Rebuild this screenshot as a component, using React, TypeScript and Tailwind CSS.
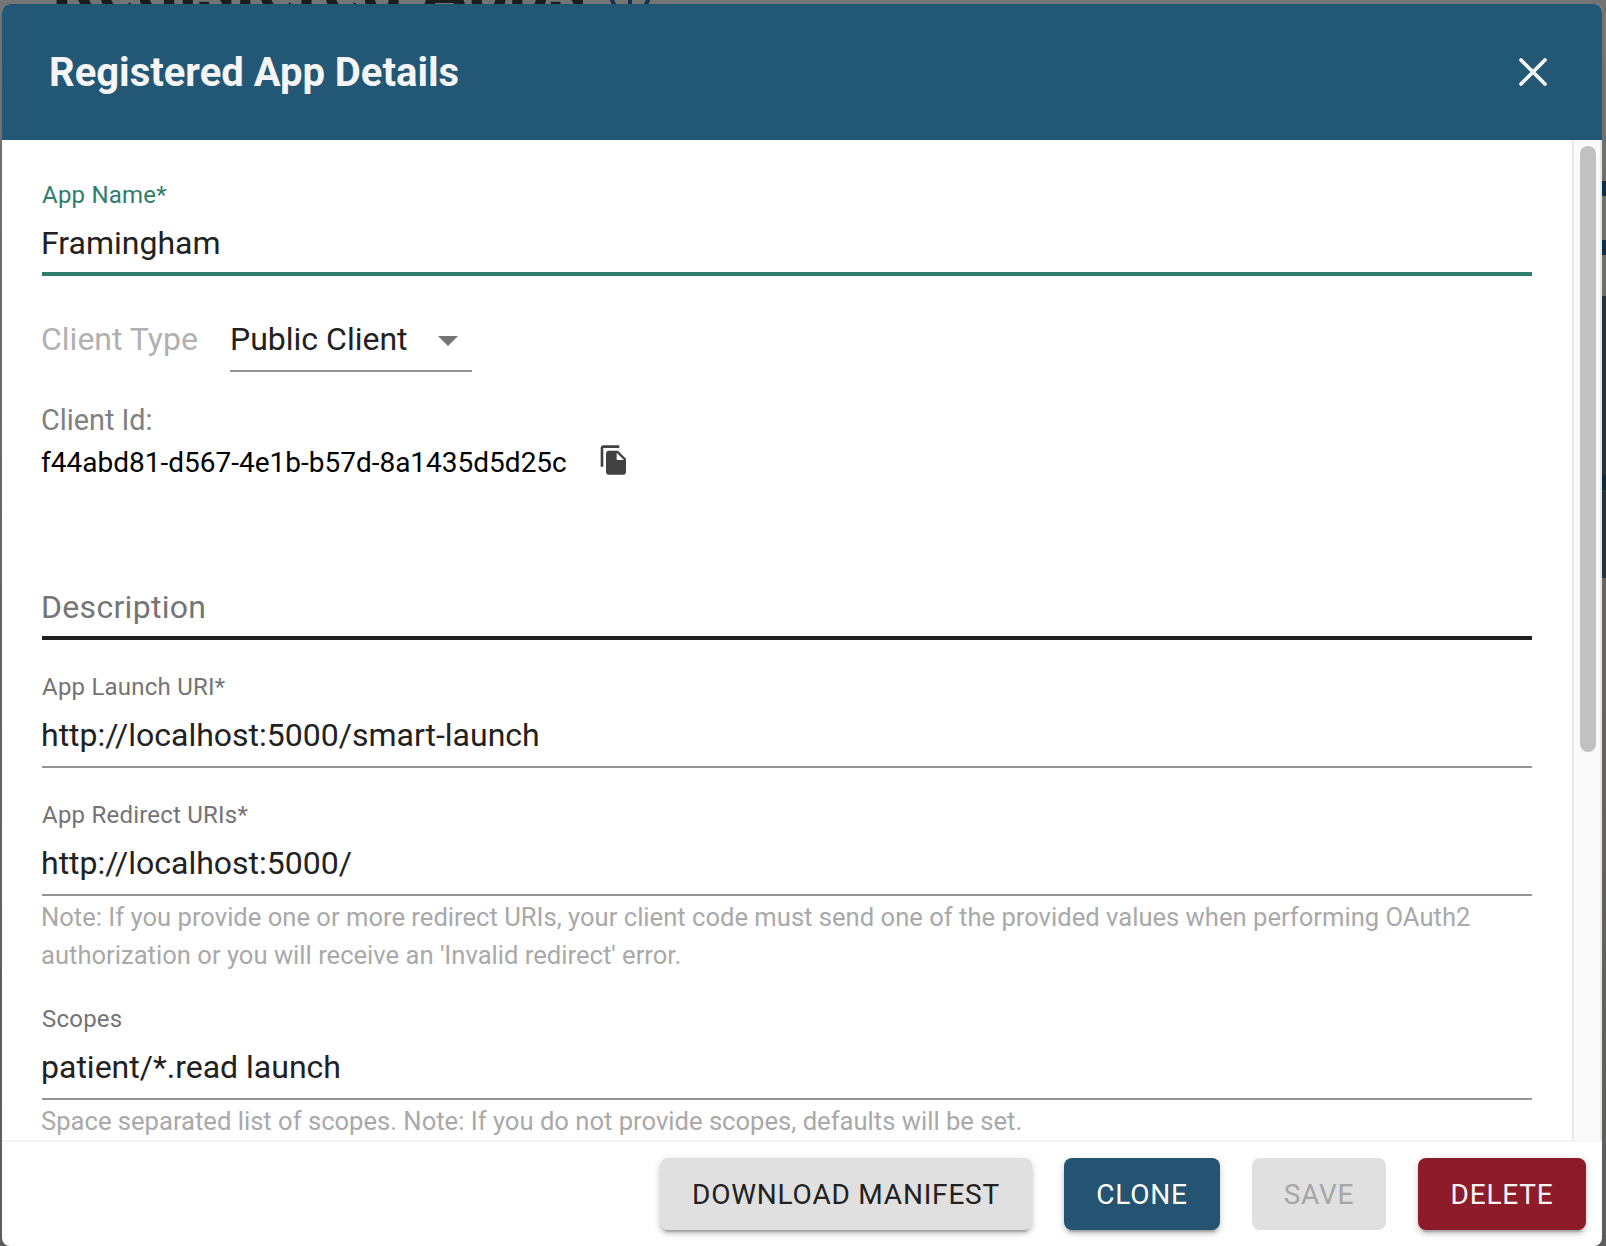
import type { ReactNode } from "react";

function Field({ label, value, focused = false }: { label: string; value: string; focused?: boolean }) {
  return (
    <div
      className={
        focused
          ? "flex h-[136px] shrink-0 flex-col border-b-[4px] border-[#2f7d6b] pt-[41px]"
          : "flex h-[128px] shrink-0 flex-col border-b-2 border-[#949494] pt-[33px]"
      }
    >
      <div className={`text-[24px] leading-[28px] tracking-[0.22px] ${focused ? "text-[#2f7d6b]" : "text-[#747474]"}`}>
        {label}
      </div>
      <div className="-ml-px pt-[15px] text-[32px] leading-[38px] text-[#212121]">{value}</div>
    </div>
  );
}

function Hint({ children, className }: { children: ReactNode; className: string }) {
  return (
    <p className={`-ml-px shrink-0 pt-[2px] text-[25.6px] leading-[38px] whitespace-nowrap text-[#a9a9a9] ${className}`}>
      {children}
    </p>
  );
}

function Backdrop() {
  return (
    <div className="absolute inset-0 bg-linear-to-b from-[#747474] via-[#666562] to-[#5c5c5c]">
      <div className="absolute -top-[46px] left-[52px] text-[72px] leading-[72px] font-bold whitespace-nowrap text-[#1c1c1c]">
        Registered Apps
      </div>
      <svg className="absolute -top-[27px] left-[609px] h-[42px] w-[42px]" viewBox="0 0 42 42" fill="none" stroke="#16304a" strokeWidth="4">
        <circle cx="21" cy="21" r="19" />
        <path d="M21 19V33" />
      </svg>
      <div className="absolute top-[181px] right-0 h-[15px] w-[4px] bg-[#0c2f49]" />
      <div className="absolute top-[240px] right-0 h-[15px] w-[4px] bg-[#0c2f49]" />
      <div className="absolute top-[296px] right-0 h-[282px] w-[4px] bg-[#25343e]" />
      <div className="absolute top-[475px] right-0 h-[15px] w-[4px] bg-[#0b2a3a]" />
    </div>
  );
}

const raised = "shadow-[0_6px_2px_-4px_rgba(0,0,0,0.2),0_4px_4px_0_rgba(0,0,0,0.14),0_2px_10px_0_rgba(0,0,0,0.12)]";

function Button({ children, className }: { children: ReactNode; className: string }) {
  return (
    <button
      type="button"
      className={`flex h-[72px] items-center justify-center rounded-[8px] pt-px text-[28px] leading-[36px] tracking-[0.8px] whitespace-nowrap ${className}`}
    >
      {children}
    </button>
  );
}

export default function App() {
  return (
    <div className="relative h-[1246px] w-[1606px] overflow-hidden font-['Roboto',sans-serif]">
      <Backdrop />
      <div className="relative mt-[4px] ml-[2px] flex h-[1242px] w-[1600px] flex-col overflow-hidden rounded-[8px] bg-white">
        <header className="flex h-[136px] shrink-0 items-center justify-between bg-[#225775] pr-[54px] pl-[47px]">
          <h1 className="pt-[2px] text-[40px] leading-[48px] font-bold text-[#f5f5f5]">Registered App Details</h1>
          <svg className="h-[30px] w-[30px]" viewBox="0 0 30 30" fill="none" stroke="#fafafa" strokeWidth="3.7" strokeLinecap="round">
            <path d="M3 3L27 27M27 3L3 27" />
          </svg>
        </header>

        <div className="flex h-[1000px] shrink-0">
          <main className="flex h-[1000px] w-[1570px] shrink-0 flex-col pr-[40px] pl-[40px]">
            <Field label="App Name*" value="Framingham" focused />
            <div className="mt-[36px] -ml-px flex h-[60px] shrink-0 items-start text-[32px] leading-[38px]">
              <span className="w-[189px] pt-[8px] text-[#b1b1b1]">Client Type</span>
              <div className="flex h-[60px] w-[242px] items-start justify-between border-b-2 border-[#949494] pt-[8px] pr-[14px] text-[#212121]">
                Public Client
                <svg className="mt-[16px] h-[10px] w-[20px]" viewBox="0 0 20 10">
                  <path d="M0 0H20L10 10Z" fill="#757575" />
                </svg>
              </div>
            </div>
            <div className="mt-[30px] -ml-px shrink-0 text-[28.8px] leading-[36px] text-[#808080]">Client Id:</div>
            <div className="mt-[6px] -ml-px flex h-[38px] shrink-0 items-start text-[28px] text-black">
              <span className="w-[557px] pt-px leading-[36px]">f44abd81-d567-4e1b-b57d-8a1435d5d25c</span>
              <svg className="h-[32px] w-[32px]" viewBox="0 0 24 24" fill="#424242">
                <path d="M16 1H4c-1.1 0-2 .9-2 2v14h2V3h12V1zm-1 4l6 6v10c0 1.1-.9 2-2 2H7.990C6.890 23 6 22.100 6 21l.010-14c0-1.100.890-2 1.990-2h7zm-1 7h5.500L14 6.500V12z" />
              </svg>
            </div>
            <div className="mt-[106px] h-[52px] shrink-0 border-b-[4px] border-[#212121] text-[32px] leading-[38px] text-[#757575]">
              <span className="-ml-px tracking-[0.3px]">Description</span>
            </div>
            <Field label="App Launch URI*" value="http://localhost:5000/smart-launch" />
            <Field label="App Redirect URIs*" value="http://localhost:5000/" />
            <Hint className="h-[76px]">
              Note: If you provide one or more redirect URIs, your client code must send one of the provided values when performing OAuth2
              <br />
              authorization or you will receive an 'Invalid redirect' error.
            </Hint>
            <Field label="Scopes" value="patient/*.read launch" />
            <Hint className="h-[40px]">
              Space separated list of scopes. Note: If you do not provide scopes, defaults will be set.
            </Hint>
          </main>
          <div className="flex w-[30px] shrink-0 border-x-2 border-[#e8e8e8] bg-[#fafafa] pt-[6px] pl-[6px]">
            <div className="h-[606px] w-[16px] rounded-full bg-[#c1c1c1]" />
          </div>
        </div>

        <footer className="flex h-[102px] shrink-0 items-start justify-end border-t-2 border-[#f4f4f4] pt-[16px] pr-[16px]">
          <Button className={`mr-[32px] w-[372px] bg-[#e0e0e0] text-[#212121] ${raised}`}>DOWNLOAD MANIFEST</Button>
          <Button className={`mr-[32px] w-[156px] bg-[#255472] text-white ${raised}`}>CLONE</Button>
          <Button className="mr-[32px] w-[134px] bg-[#e0e0e0] text-[#a6a6a6]">SAVE</Button>
          <Button className={`w-[168px] bg-[#8d1b29] text-[#f5f5f5] ${raised}`}>DELETE</Button>
        </footer>
      </div>
    </div>
  );
}
